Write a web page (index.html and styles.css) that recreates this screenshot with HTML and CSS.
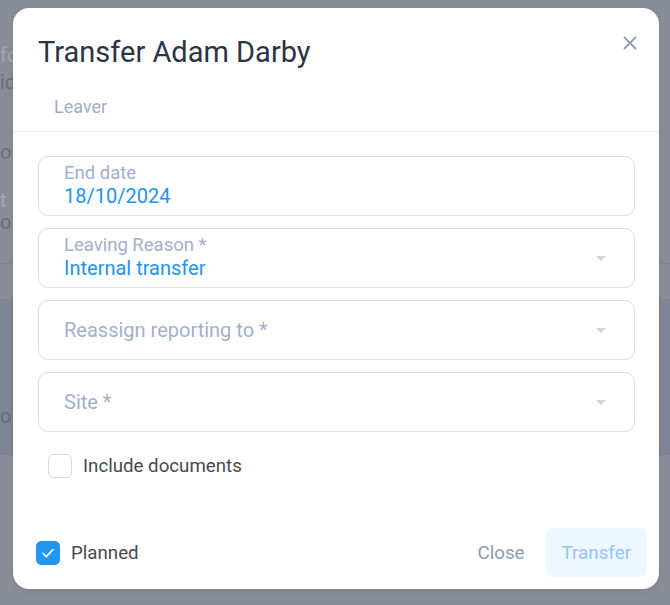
FILE: index.html
```html
<!DOCTYPE html>
<html lang="en">
<head>
    <meta charset="UTF-8">
    <meta name="viewport" content="width=device-width, initial-scale=1.0">
    <title>Transfer Adam Darby</title>
    <link rel="stylesheet" href="styles.css">
</head>
<body>
    <!-- page behind the dialog, dimmed by the overlay -->
    <div class="backdrop">
        <div class="bg-row muted r1">fo</div>
        <div class="bg-row r2">ic</div>
        <div class="bg-row r3">o</div>
        <div class="bg-row muted r4">t</div>
        <div class="bg-row r5">o</div>
        <div class="bg-band">
            <div class="bg-row">o</div>
        </div>
    </div>

    <div class="modal">
        <header class="modal-header">
            <h1>Transfer Adam Darby</h1>
            <button class="close-btn" aria-label="Close">
                <svg width="14" height="14" viewBox="0 0 14 14">
                    <path d="M1.5 1.5L12.5 12.5M12.5 1.5L1.5 12.5" stroke="#8d9bb3" stroke-width="1.8" stroke-linecap="round"/>
                </svg>
            </button>
        </header>

        <div class="tabs">
            <span class="tab">Leaver</span>
        </div>

        <main class="modal-body">
            <div class="field">
                <span class="field-label">End date</span>
                <span class="field-value">18/10/2024</span>
            </div>

            <div class="field select">
                <div class="field-text">
                    <span class="field-label">Leaving Reason *</span>
                    <span class="field-value">Internal transfer</span>
                </div>
                <span class="caret"></span>
            </div>

            <div class="field select">
                <span class="placeholder">Reassign reporting to *</span>
                <span class="caret"></span>
            </div>

            <div class="field select">
                <span class="placeholder">Site *</span>
                <span class="caret"></span>
            </div>

            <label class="check-row indent">
                <span class="checkbox"></span>
                <span>Include documents</span>
            </label>
        </main>

        <footer class="modal-footer">
            <label class="check-row">
                <span class="checkbox checked">
                    <svg width="16" height="16" viewBox="0 0 16 16">
                        <path d="M3 8.3L6.4 11.6L13 4.6" fill="none" stroke="#fff" stroke-width="1.6" stroke-linecap="round" stroke-linejoin="round"/>
                    </svg>
                </span>
                <span>Planned</span>
            </label>
            <div class="actions">
                <button class="btn-text">Close</button>
                <button class="btn-primary" disabled>Transfer</button>
            </div>
        </footer>
    </div>
</body>
</html>
```

FILE: styles.css
```css
/* General */
* {
    box-sizing: border-box;
}

body {
    margin: 0;
    font-family: 'Roboto', 'Liberation Sans', sans-serif;
    background-color: #898d98;
    height: 605px;
    overflow: hidden;
    position: relative;
}

/* Dimmed page behind */
.backdrop {
    padding-top: 42px;
}

.bg-row {
    font-size: 20px;
    line-height: 26px;
    color: #6b6f79;
    white-space: nowrap;
}

.bg-row.muted {
    color: #a3a7b0;
}

.r2 {
    margin-top: 1px;
}

.r3 {
    margin-top: 44px;
}

.r4 {
    margin-top: 22px;
}

.r5 {
    margin-top: -4px;
    padding-bottom: 28px;
    border-bottom: 1px solid #80848f;
}

.bg-band {
    margin-top: 35px;
    height: 156px;
    background-color: #7f8596;
    padding-top: 104px;
}

/* Dialog */
.modal {
    position: absolute;
    top: 8px;
    left: 13px;
    width: 646px;
    height: 581px;
    background-color: #fff;
    border-radius: 16px;
    display: flex;
    flex-direction: column;
    box-shadow: 0 2px 6px rgba(0, 0, 0, 0.08);
}

.modal-header {
    display: flex;
    justify-content: space-between;
    align-items: flex-start;
    padding: 27px 22px 0 25px;
}

.modal-header h1 {
    margin: 0;
    font-size: 29px;
    font-weight: 400;
    line-height: 34px;
    color: #2b3445;
}

.close-btn {
    background: none;
    border: none;
    padding: 0;
    margin-top: 1px;
    cursor: pointer;
    line-height: 0;
}

.tabs {
    padding: 26px 0 12px 41px;
    border-bottom: 1px solid #e8ebf1;
}

.tab {
    display: inline-block;
    font-size: 18px;
    line-height: 24px;
    color: #9eadcd;
}

.modal-body {
    padding: 24px 24px 0 25px;
    display: flex;
    flex-direction: column;
    gap: 12px;
}

.field {
    height: 60px;
    border: 1px solid #dcdde0;
    border-radius: 10px;
    padding: 6px 25px 0 25px;
    display: flex;
    flex-direction: column;
}

.field.select {
    flex-direction: row;
    align-items: center;
    justify-content: space-between;
    padding: 0 28px 0 25px;
}

.field-text {
    display: flex;
    flex-direction: column;
    align-self: flex-start;
    padding-top: 6px;
}

.field-label {
    font-size: 18.5px;
    line-height: 20px;
    color: #a2afcf;
}

.field-value {
    font-size: 20px;
    line-height: 24px;
    margin-top: 1px;
    color: #2492ef;
}

.placeholder {
    font-size: 20px;
    color: #a2afcf;
}

.caret {
    width: 0;
    height: 0;
    border-left: 5px solid transparent;
    border-right: 5px solid transparent;
    border-top: 5px solid #d3d5d9;
}

.check-row {
    display: flex;
    align-items: center;
    gap: 11px;
    font-size: 18.7px;
    color: #474a50;
    cursor: pointer;
}

.check-row.indent {
    margin-top: 10px;
    padding-left: 10px;
}

.checkbox {
    width: 24px;
    height: 24px;
    border: 1.5px solid #d9dadd;
    border-radius: 5px;
    display: flex;
    align-items: center;
    justify-content: center;
}

.checkbox.checked {
    background-color: #2196f3;
    border-color: #2196f3;
}

/* Footer */
.modal-footer {
    margin-top: auto;
    display: flex;
    justify-content: space-between;
    align-items: center;
    padding: 0 12px 12px 23px;
}

.actions {
    display: flex;
    gap: 5px;
}

.btn-text, .btn-primary {
    font-family: inherit;
    font-size: 18.8px;
    height: 49px;
    padding: 0 16px;
    border: none;
    border-radius: 6px;
    cursor: pointer;
}

.btn-text {
    background: none;
    color: #8d9bb3;
}

.btn-primary {
    background-color: #eef6ff;
    color: #93c6f7;
}
```
